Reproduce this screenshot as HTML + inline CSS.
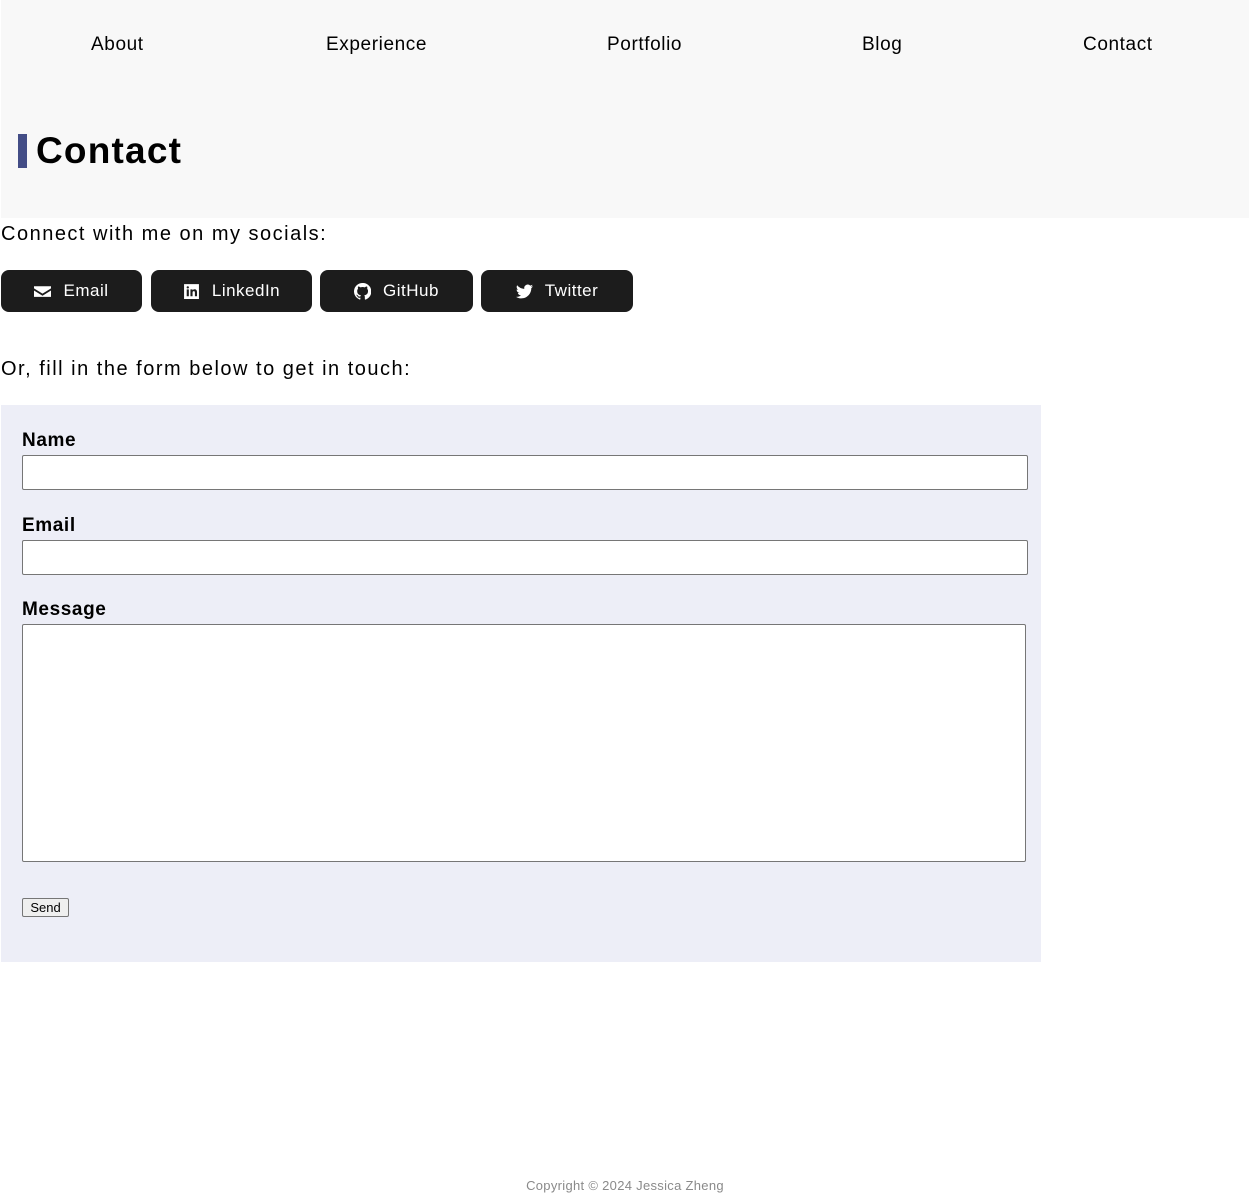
<!DOCTYPE html>
<html><head><style>
*{margin:0;padding:0;box-sizing:border-box}
body{width:1250px;height:1203px;position:relative;font-family:"Liberation Sans",sans-serif;background:#fff;color:#000}
.a{position:absolute}
.hdr{left:1px;top:0;width:1248px;height:218px;background:#f8f8f8}
.nav{top:34px;font-size:19px;letter-spacing:0.6px}
h1{position:absolute;left:36px;top:130px;font-size:37px;font-weight:bold;letter-spacing:1.2px}
.bar{left:18px;top:134px;width:9px;height:34px;background:#434d86}
.p{left:1px;font-size:20px;letter-spacing:1.5px}
.btn{top:270px;height:42px;background:#1c1c1c;border-radius:8px;color:#fff;font-size:17px;letter-spacing:0.5px;display:flex;align-items:center;justify-content:center;gap:12px}
.btn svg{width:17px;height:17px;fill:#fff}
.form{left:1px;top:405px;width:1040px;height:557px;background:#edeef7}
.lbl{left:22px;font-size:19px;font-weight:bold;letter-spacing:0.6px}
.inp{left:22px;width:1006px;height:35px;background:#fff;border:1px solid #767676;border-radius:2px}
</style></head><body>
<div class="a hdr"></div>
<div class="a nav" style="left:91px">About</div>
<div class="a nav" style="left:326px">Experience</div>
<div class="a nav" style="left:607px">Portfolio</div>
<div class="a nav" style="left:862px">Blog</div>
<div class="a nav" style="left:1083px">Contact</div>
<div class="a bar"></div>
<h1>Contact</h1>
<div class="a p" style="top:223px">Connect with me on my socials:</div>
<div class="a btn" style="left:1px;width:141px"><svg viewBox="0 0 16 16"><path d="M0 3h16v2L8 10 0 5z M0 7l8 5 8-5v6H0z"/></svg>Email</div>
<div class="a btn" style="left:151px;width:161px"><svg viewBox="0 0 16 16"><path d="M1 1h14v14H1z M3.5 6v6.5h2V6z M4.5 3a1.1 1.1 0 100 2.2 1.1 1.1 0 000-2.2z M7 6v6.5h2V9c0-1 .5-1.4 1.2-1.4.7 0 1 .5 1 1.4v3.5h2V8.6c0-1.800-1-2.7-2.300-2.7-1 0-1.600.5-1.900 1V6z" fill-rule="evenodd"/></svg>LinkedIn</div>
<div class="a btn" style="left:320px;width:153px"><svg viewBox="0 0 16 16"><path d="M8 0a8 8 0 00-2.5 15.6c.4 0 .5-.2.5-.4v-1.4c-2.2.5-2.7-1-2.7-1-.4-.9-.9-1.2-.9-1.2-.7-.5.1-.5.1-.5.8.1 1.2.8 1.2.8.7 1.3 1.9.9 2.4.7 0-.5.3-.9.5-1.1-1.8-.2-3.6-.9-3.6-4 0-.9.3-1.6.8-2.1-.1-.2-.4-1 .1-2.1 0 0 .7-.2 2.2.8a7.5 7.5 0 014 0c1.5-1 2.2-.8 2.2-.8.4 1.1.2 1.9.1 2.1.5.6.8 1.3.8 2.1 0 3.1-1.9 3.8-3.6 4 .3.3.6.8.6 1.5v2.2c0 .2.1.5.6.4A8 8 0 008 0z"/></svg>GitHub</div>
<div class="a btn" style="left:481px;width:152px"><svg viewBox="0 0 16 16"><path d="M16 3c-.6.3-1.2.4-1.9.5.7-.4 1.2-1 1.4-1.8-.6.4-1.3.6-2.1.8a3.3 3.3 0 00-5.6 3C5.2 5.4 2.7 4.1 1.1 2.1c-.9 1.5-.4 3.4 1 4.4-.5 0-1-.2-1.5-.4 0 1.6 1.1 2.9 2.6 3.2-.5.1-1 .2-1.5.1.4 1.3 1.6 2.3 3.1 2.300A6.6 6.6 0 010 13c1.5.9 3.2 1.5 5 1.5 6 0 9.4-5 9.4-9.4v-.4C15 4.3 15.6 3.7 16 3z"/></svg>Twitter</div>
<div class="a p" style="top:358px">Or, fill in the form below to get in touch:</div>
<div class="a form"></div>
<div class="a lbl" style="top:430px">Name</div>
<div class="a inp" style="top:455px"></div>
<div class="a lbl" style="top:515px">Email</div>
<div class="a inp" style="top:540px"></div>
<div class="a lbl" style="top:599px">Message</div>
<div class="a inp" style="top:624px;width:1004px;height:238px"></div>
<div class="a" style="left:22px;top:898px;width:47px;height:19px;border:1px solid #767676;background:#efefef;border-radius:2px;font-size:13px;text-align:center;line-height:17px">Send</div>
<div class="a" style="left:0;width:1250px;top:1178px;text-align:center;font-size:13px;color:#8a8a8a;letter-spacing:0.3px">Copyright © 2024 Jessica Zheng</div>
</body></html>
